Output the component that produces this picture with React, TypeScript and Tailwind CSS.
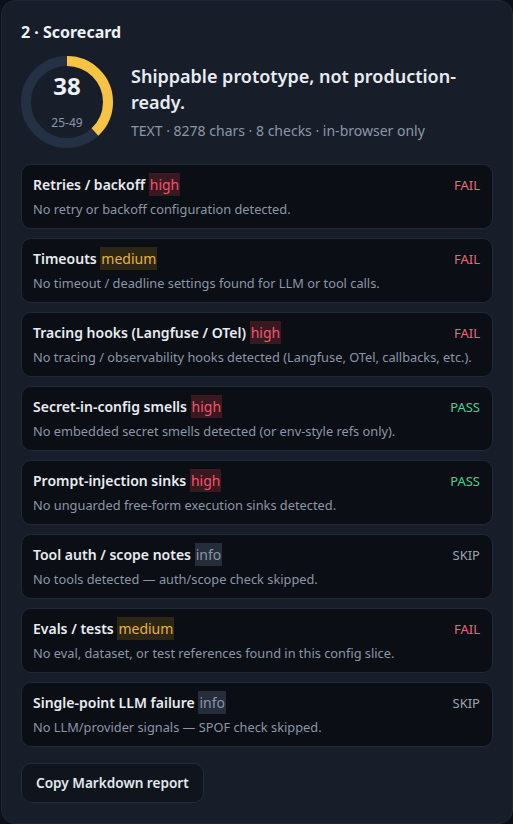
import React from "react";

type Check = {
  title: string;
  sev: "high" | "medium" | "info";
  status: "FAIL" | "PASS" | "SKIP";
  desc: string;
};

const checks: Check[] = [
  { title: "Retries / backoff", sev: "high", status: "FAIL", desc: "No retry or backoff configuration detected." },
  { title: "Timeouts", sev: "medium", status: "FAIL", desc: "No timeout / deadline settings found for LLM or tool calls." },
  { title: "Tracing hooks (Langfuse / OTel)", sev: "high", status: "FAIL", desc: "No tracing / observability hooks detected (Langfuse, OTel, callbacks, etc.)." },
  { title: "Secret-in-config smells", sev: "high", status: "PASS", desc: "No embedded secret smells detected (or env-style refs only)." },
  { title: "Prompt-injection sinks", sev: "high", status: "PASS", desc: "No unguarded free-form execution sinks detected." },
  { title: "Tool auth / scope notes", sev: "info", status: "SKIP", desc: "No tools detected — auth/scope check skipped." },
  { title: "Evals / tests", sev: "medium", status: "FAIL", desc: "No eval, dataset, or test references found in this config slice." },
  { title: "Single-point LLM failure", sev: "info", status: "SKIP", desc: "No LLM/provider signals — SPOF check skipped." },
];

const sevClass: Record<Check["sev"], string> = {
  high: "bg-[#3a1820] text-[#f0566e]",
  medium: "bg-[#2e2614] text-[#e6b43a]",
  info: "bg-[#252c3a] text-[#8c96a8]",
};

const statusClass: Record<Check["status"], string> = {
  FAIL: "text-[#f0667c]",
  PASS: "text-[#3dd692]",
  SKIP: "text-[#9aa3b2]",
};

function Gauge({ score }: { score: number }) {
  const r = 41;
  const c = 2 * Math.PI * r;
  const len = (score / 100) * c;
  return (
    <div className="relative w-[92px] h-[92px] shrink-0">
      <svg width="92" height="92" viewBox="0 0 92 92">
        <circle cx="46" cy="46" r={r} fill="none" stroke="#243044" strokeWidth="10" />
        <circle
          cx="46"
          cy="46"
          r={r}
          fill="none"
          stroke="#f6c344"
          strokeWidth="10"
          strokeDasharray={`${len} ${c}`}
          transform="rotate(-90 46 46)"
        />
      </svg>
      <div className="absolute inset-0 flex flex-col items-center">
        <div className="mt-[16px] text-[24px] leading-[28px] font-bold text-[#eef1f6]">{score}</div>
        <div className="mt-[15px] text-[12px] leading-[16px] text-[#8c96a8]">25-49</div>
      </div>
    </div>
  );
}

export default function App() {
  return (
    <div className="min-h-[824px] bg-[#0b0f17] pl-[1px]" style={{ fontFamily: '"Noto Sans", "DejaVu Sans", sans-serif' }}>
      <div className="min-h-[824px] rounded-[14px] border border-[#1f2837] bg-[#171e2a] px-[19px] pt-[18px] pb-[19px]">
        <h2 className="text-[16px] leading-[26px] font-bold text-[#eef1f6]">2 · Scorecard</h2>
        <div className="mt-[11px] flex items-center gap-[18px]">
          <Gauge score={38} />
          <div className="flex flex-col">
            <div className="text-[18px] leading-[26px] font-semibold text-[#e8ecf2]">
              Shippable prototype, not production-ready.
            </div>
            <div className="mt-[6px] text-[14px] leading-[20px] text-[#8c96a8]">
              TEXT · 8278 chars · 8 checks · in-browser only
            </div>
          </div>
        </div>
        <div className="mt-[16px] flex flex-col gap-[9px]">
          {checks.map((ch) => (
            <div
              key={ch.title}
              className="rounded-[10px] border border-[#1f2938] bg-[#0b0e14] pl-[11px] pr-[12px] pt-[10px] pb-[9px]"
            >
              <div className="flex items-start justify-between">
                <div className="text-[14px] leading-[20px] font-semibold text-[#e8ecf2]">
                  {ch.title}{" "}
                  <span className={`font-normal px-[1px] py-[2px] ${sevClass[ch.sev]}`}>{ch.sev}</span>
                </div>
                <div className={`text-[13px] leading-[20px] ${statusClass[ch.status]}`}>{ch.status}</div>
              </div>
              <div className="mt-[4px] text-[12.8px] leading-[20px] text-[#8c96a8]">{ch.desc}</div>
            </div>
          ))}
        </div>
        <button className="mt-[16px] h-[40px] rounded-[10px] border border-[#222c3c] bg-[#0f141d] px-[14px] text-[13.6px] font-semibold text-[#e3e8ef]">
          Copy Markdown report
        </button>
      </div>
    </div>
  );
}
